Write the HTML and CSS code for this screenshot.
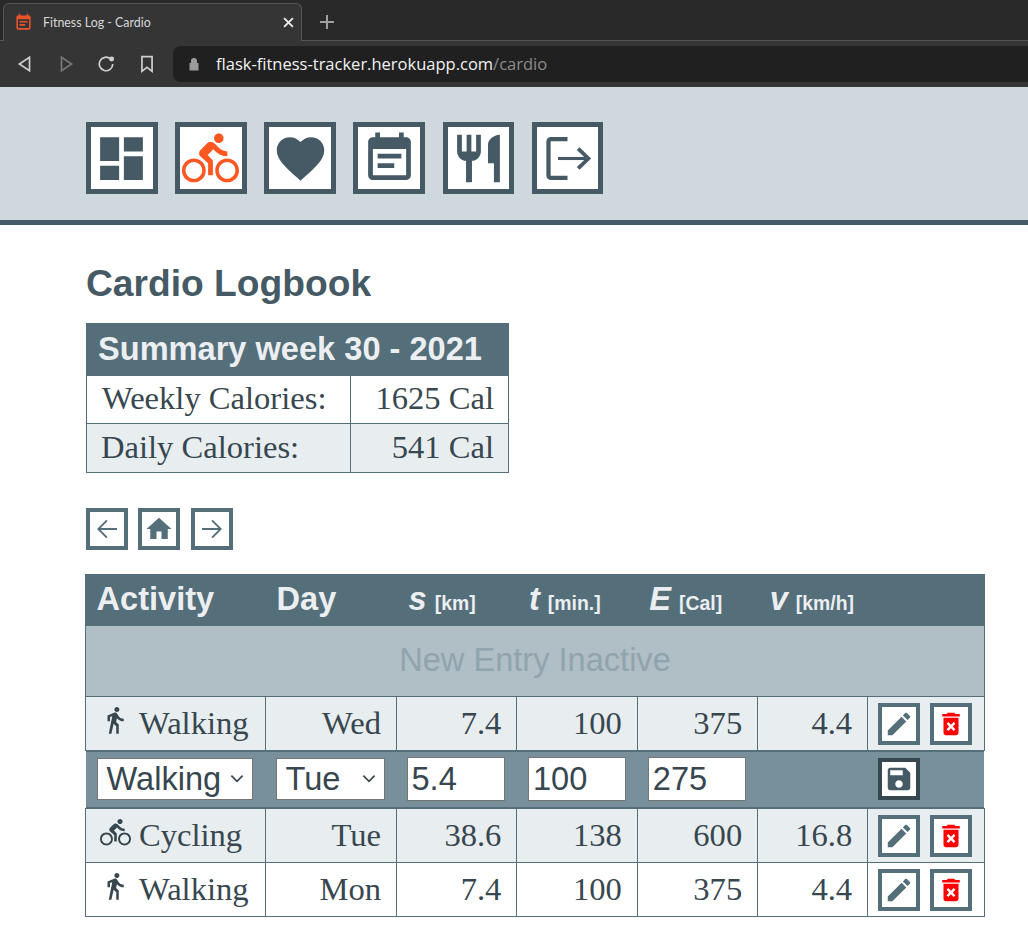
FILE: index.html
```html
<!DOCTYPE html>
<html lang="en">
<head>
  <meta charset="UTF-8" />
  <meta name="viewport" content="width=device-width, initial-scale=1" />
  <title>Fitness Log - Cardio</title>
  <link rel="stylesheet" href="styles.css">
</head>
<body>

  <svg class="sprite" aria-hidden="true">
    <symbol id="i-dashboard" viewBox="0 0 24 24"><path d="M3 13h8V3H3v10zm0 8h8v-6H3v6zm10 0h8V11h-8v10zm0-18v6h8V3h-8z"/></symbol>
    <symbol id="i-bike" viewBox="0 0 24 24"><path d="M15.5 5.5c1.1 0 2-.9 2-2s-.9-2-2-2-2 .9-2 2 .9 2 2 2zM5 12c-2.8 0-5 2.2-5 5s2.2 5 5 5 5-2.2 5-5-2.2-5-5-5zm0 8.5c-1.9 0-3.5-1.6-3.5-3.5s1.6-3.5 3.5-3.5 3.5 1.6 3.5 3.5-1.6 3.5-3.5 3.5zm5.8-10l2.4-2.4.8.8c1.3 1.3 3 2.1 5.1 2.1V9c-1.5 0-2.7-.6-3.6-1.5l-1.9-1.9c-.5-.4-1-.6-1.6-.6s-1.1.2-1.4.6L7.8 8.4c-.4.4-.6.9-.6 1.4 0 .6.2 1.1.6 1.4L11 14v5h2v-6.2l-2.2-2.3zM19 12c-2.8 0-5 2.2-5 5s2.2 5 5 5 5-2.2 5-5-2.2-5-5-5zm0 8.5c-1.9 0-3.5-1.6-3.5-3.5s1.6-3.5 3.5-3.5 3.5 1.6 3.5 3.5-1.6 3.5-3.5 3.5z"/></symbol>
    <symbol id="i-heart" viewBox="0 0 24 24"><path d="M12 21.35l-1.45-1.32C5.4 15.36 2 12.28 2 8.5 2 5.42 4.42 3 7.5 3c1.74 0 3.41.81 4.5 2.09C13.09 3.81 14.76 3 16.5 3 19.58 3 22 5.42 22 8.5c0 3.78-3.4 6.86-8.55 11.54L12 21.35z"/></symbol>
    <symbol id="i-note" viewBox="0 0 24 24"><path d="M17 10H7v2h10v-2zm2-7h-1V1h-2v2H8V1H6v2H5c-1.11 0-1.99.9-1.99 2L3 19c0 1.1.89 2 2 2h14c1.1 0 2-.9 2-2V5c0-1.1-.9-2-2-2zm0 16H5V8h14v11zm-5-5H7v2h7v-2z"/></symbol>
    <symbol id="i-food" viewBox="0 0 24 24"><path d="M11 9H9V2H7v7H5V2H3v7c0 2.12 1.66 3.84 3.75 3.97V22h2.5v-9.03C11.34 12.84 13 11.12 13 9V2h-2v7zm5-3v8h2.5v8H21V2c-2.76 0-5 2.24-5 4z"/></symbol>
    <symbol id="i-exit" viewBox="0 0 24 24"><path class="line" d="M12 3.8H5a1 1 0 0 0-1 1v14.4a1 1 0 0 0 1 1h7" stroke-width="1.8"/><path class="line" d="M8 12h13" stroke-width="1.3"/><path class="line" d="M16.5 7.8l4.3 4.2-4.3 4.2" stroke-width="1.6"/></symbol>
    <symbol id="i-home" viewBox="0 0 24 24"><path d="M10 20v-6h4v6h5v-8h3L12 3 2 12h3v8z"/></symbol>
    <symbol id="i-back" viewBox="0 0 24 24"><path d="M20 11.25H6.9l5.6-5.6L11.4 4.6 4 12l7.4 7.4 1.1-1.05-5.6-5.6H20z"/></symbol>
    <symbol id="i-next" viewBox="0 0 24 24"><path d="M4 11.25h13.1l-5.6-5.6 1.1-1.05L20 12l-7.4 7.4-1.1-1.05 5.6-5.6H4z"/></symbol>
    <symbol id="i-edit" viewBox="0 0 24 24"><path d="M3 17.25V21h3.75L17.81 9.94l-3.75-3.75L3 17.25zM20.71 7.04c.39-.39.39-1.02 0-1.41l-2.34-2.34c-.39-.39-1.02-.39-1.41 0l-1.83 1.83 3.75 3.75 1.83-1.83z"/></symbol>
    <symbol id="i-delete" viewBox="0 0 24 24"><path d="M6 19c0 1.1.9 2 2 2h8c1.1 0 2-.9 2-2V7H6v12zm2.46-7.12l1.41-1.41L12 12.59l2.12-2.12 1.41 1.41L13.41 14l2.12 2.12-1.41 1.41L12 15.41l-2.12 2.12-1.41-1.41L10.59 14l-2.13-2.12zM15.5 4l-1-1h-5l-1 1H5v2h14V4z"/></symbol>
    <symbol id="i-save" viewBox="0 0 24 24"><path d="M17 3H5c-1.11 0-2 .9-2 2v14c0 1.1.89 2 2 2h14c1.1 0 2-.9 2-2V7l-4-4zm-5 16c-1.66 0-3-1.34-3-3s1.34-3 3-3 3 1.34 3 3-1.34 3-3 3zm3-10H5V5h10v4z"/></symbol>
    <symbol id="i-walk" viewBox="0 0 24 24"><path d="M13.5 5.5c1.1 0 2-.9 2-2s-.9-2-2-2-2 .9-2 2 .9 2 2 2zM9.8 8.9L7 23h2.1l1.8-8 2.1 2v6h2v-7.5l-2.1-2 .6-3C14.8 12 16.8 13 19 13v-2c-1.9 0-3.5-1-4.3-2.4l-1-1.6c-.4-.6-1-1-1.7-1-.3 0-.5.1-.8.1L6 8.3V13h2V9.6l1.8-.7z"/></symbol>
  </svg>

  <div class="browser">
    <div class="tabstrip">
      <div class="tab">
        <svg class="tab-icon"><use href="#i-note"/></svg>
        <span class="tab-title">Fitness Log - Cardio</span>
        <svg class="tab-close" viewBox="0 0 10 10"><path d="M1 1l8 8M9 1l-8 8"/></svg>
      </div>
      <svg class="tab-new" viewBox="0 0 14 14"><path d="M7 0v14M0 7h14"/></svg>
    </div>
    <div class="toolbar">
      <div class="tool-buttons">
        <svg class="tool" viewBox="0 0 16 16"><path d="M12 2v12L3 8z"/></svg>
        <svg class="tool off" viewBox="0 0 16 16"><path d="M4 2v12l9-6z"/></svg>
        <svg class="tool" viewBox="0 0 16 16"><path d="M14 8a6 6 0 1 1-2-4.5"/><circle class="dot" cx="13" cy="3.5" r="2.2"/></svg>
        <svg class="tool" viewBox="0 0 16 16"><path d="M3.5 1.5h9v13L8 11l-4.5 3.5z"/></svg>
      </div>
      <div class="omnibox">
        <svg class="lock" viewBox="0 0 12 14"><path d="M3 6V4a3 3 0 0 1 6 0v2h1.5v7.5h-9V6z"/></svg>
        <span class="url">flask-fitness-tracker.herokuapp.com<span class="url-path">/cardio</span></span>
      </div>
    </div>
  </div>

  <header class="site-header">
    <nav class="main-nav">
      <a class="nav-btn"><svg><use href="#i-dashboard"/></svg></a>
      <a class="nav-btn active"><svg><use href="#i-bike"/></svg></a>
      <a class="nav-btn"><svg><use href="#i-heart"/></svg></a>
      <a class="nav-btn"><svg><use href="#i-note"/></svg></a>
      <a class="nav-btn"><svg><use href="#i-food"/></svg></a>
      <a class="nav-btn"><svg><use href="#i-exit"/></svg></a>
    </nav>
  </header>

  <main class="content">
    <h1>Cardio Logbook</h1>

    <table class="summary">
      <colgroup><col class="c-label"><col></colgroup>
      <thead>
        <tr><th colspan="2">Summary week 30 - 2021</th></tr>
      </thead>
      <tbody>
        <tr><td>Weekly Calories:</td><td class="num">1625 Cal</td></tr>
        <tr class="alt"><td>Daily Calories:</td><td class="num">541 Cal</td></tr>
      </tbody>
    </table>

    <div class="pager">
      <a class="mini-btn"><svg><use href="#i-back"/></svg></a>
      <a class="mini-btn"><svg><use href="#i-home"/></svg></a>
      <a class="mini-btn"><svg><use href="#i-next"/></svg></a>
    </div>

    <table class="log">
      <colgroup>
        <col class="c-activity"><col class="c-day"><col class="c-val"><col class="c-val"><col class="c-val"><col class="c-v"><col class="c-actions">
      </colgroup>
      <thead>
        <tr>
          <th>Activity</th>
          <th>Day</th>
          <th><i>s</i> <small>[km]</small></th>
          <th><i>t</i> <small>[min.]</small></th>
          <th><i>E</i> <small>[Cal]</small></th>
          <th><i>v</i> <small>[km/h]</small></th>
          <th></th>
        </tr>
      </thead>
      <tbody>
        <tr class="new-entry"><td colspan="7">New Entry Inactive</td></tr>
        <tr class="alt">
          <td class="activity"><svg class="act-icon walk"><use href="#i-walk"/></svg>Walking</td>
          <td class="num">Wed</td><td class="num">7.4</td><td class="num">100</td><td class="num">375</td><td class="num">4.4</td>
          <td class="actions">
            <a class="mini-btn"><svg><use href="#i-edit"/></svg></a>
            <a class="mini-btn del"><svg><use href="#i-delete"/></svg></a>
          </td>
        </tr>
        <tr class="editing">
          <td><div class="fake-select wide">Walking<svg viewBox="0 0 12 8"><path d="M1 1.5l5 5 5-5"/></svg></div></td>
          <td><div class="fake-select">Tue<svg viewBox="0 0 12 8"><path d="M1 1.5l5 5 5-5"/></svg></div></td>
          <td><input type="text" value="5.4"></td>
          <td><input type="text" value="100"></td>
          <td><input type="text" value="275"></td>
          <td></td>
          <td class="actions"><a class="mini-btn save"><svg><use href="#i-save"/></svg></a></td>
        </tr>
        <tr class="alt">
          <td class="activity"><svg class="act-icon bike"><use href="#i-bike"/></svg>Cycling</td>
          <td class="num">Tue</td><td class="num">38.6</td><td class="num">138</td><td class="num">600</td><td class="num">16.8</td>
          <td class="actions">
            <a class="mini-btn"><svg><use href="#i-edit"/></svg></a>
            <a class="mini-btn del"><svg><use href="#i-delete"/></svg></a>
          </td>
        </tr>
        <tr>
          <td class="activity"><svg class="act-icon walk"><use href="#i-walk"/></svg>Walking</td>
          <td class="num">Mon</td><td class="num">7.4</td><td class="num">100</td><td class="num">375</td><td class="num">4.4</td>
          <td class="actions">
            <a class="mini-btn"><svg><use href="#i-edit"/></svg></a>
            <a class="mini-btn del"><svg><use href="#i-delete"/></svg></a>
          </td>
        </tr>
      </tbody>
    </table>
  </main>

</body>
</html>
```

FILE: styles.css
```css
/* Fitness log page, with the browser frame on top */
body {
  margin: 0;
  background: #fff;
  font-family: "Liberation Serif", serif;
  color: #37474f;
  overflow: hidden;
}

.sprite {
  display: none;
}

/* Browser frame */
.browser {
  background: #353535;
  font-family: "Open Sans", sans-serif;
}

.tabstrip {
  height: 41px;
  box-sizing: border-box;
  background: #292929;
  border-bottom: 1px solid #555;
  display: flex;
  align-items: flex-end;
  padding-left: 3px;
}

.tab {
  width: 299px;
  height: 38px;
  margin-bottom: -1px;
  box-sizing: border-box;
  background: #353535;
  border: 1px solid #555;
  border-bottom: none;
  border-radius: 6px 6px 0 0;
  display: flex;
  align-items: center;
  padding: 0 5px 1px 10px;
  color: #d8d8d8;
  font-family: Lato, sans-serif;
  font-size: 12.4px;
}

.tab-icon {
  width: 19px;
  height: 19px;
  fill: #e8542a;
  margin-right: 10px;
}

.tab-title {
  flex: 1;
}

.tab-close {
  width: 11px;
  height: 11px;
  margin-right: 2px;
  fill: none;
  stroke: #e8e8e8;
  stroke-width: 1.8;
}

.tab-new {
  width: 14px;
  height: 14px;
  margin: 0 0 11px 18px;
  fill: none;
  stroke: #a0a0a0;
  stroke-width: 2;
}

.toolbar {
  height: 46px;
  box-sizing: border-box;
  display: flex;
  align-items: center;
  padding: 0 0 0 16px;
}

.tool-buttons {
  display: flex;
  gap: 22.7px;
  width: 157px;
}

.tool {
  width: 18px;
  height: 18px;
  fill: none;
  stroke: #d0d0d0;
  stroke-width: 1.5;
}

.tool.off {
  stroke: #777;
}

.tool .dot {
  fill: #d0d0d0;
  stroke: none;
}

.omnibox {
  flex: 1;
  height: 36px;
  background: #202020;
  border-radius: 8px 0 0 8px;
  display: flex;
  align-items: center;
  padding-left: 15px;
}

.lock {
  width: 12px;
  height: 14px;
  fill: #9a9a9a;
  margin-right: 16px;
}

.url {
  padding-bottom: 2px;
  color: #f2f2f2;
  font-size: 16.5px;
}

.url-path {
  color: #8c8c8c;
}

/* Site header */
.site-header {
  background: #cfd8dc;
  border-bottom: 5px solid #455a64;
  padding: 35px 86px 26px;
}

.main-nav {
  display: flex;
  gap: 17.55px;
}

.nav-btn {
  width: 71.6px;
  height: 72px;
  box-sizing: border-box;
  background: #fff;
  border: 5px solid #455a64;
  display: flex;
  align-items: center;
  justify-content: center;
  fill: #455a64;
}

.nav-btn svg {
  width: 57px;
  height: 57px;
}

.line {
  fill: none;
  stroke: #455a64;
}

.nav-btn.active {
  fill: #ff5722;
}

/* Page content */
.content {
  padding: 0 43px 0 86px;
}

h1 {
  margin: 37px 0 19px;
  font: bold 37.2px/42px "Liberation Sans", sans-serif;
  color: #455a64;
}

table {
  border-collapse: collapse;
}

.summary {
  width: 423px;
  table-layout: fixed;
  font-size: 32.6px;
}

.c-label {
  width: 264px;
}

.summary th {
  height: 49px;
  padding: 0 11px 2px;
  border: 1px solid #546e7a;
  background: #546e7a;
  color: #eceff1;
  font: bold 32.6px "Liberation Sans", sans-serif;
  text-align: left;
}

.summary td {
  height: 45px;
  padding: 0 14px 2px 15px;
  border: 1px solid #546e7a;
}

.summary .alt td {
  height: 46px;
  padding-left: 14px;
}

.alt td {
  background: #e8edf0;
}

.num {
  text-align: right;
}

.pager {
  display: flex;
  gap: 10.4px;
  margin: 35px 0 24px;
}

.mini-btn {
  width: 42px;
  height: 42px;
  box-sizing: border-box;
  background: #fff;
  border: 4px solid #546e7a;
  display: inline-flex;
  align-items: center;
  justify-content: center;
  fill: #546e7a;
}

.mini-btn svg {
  width: 30px;
  height: 30px;
}

.mini-btn.del {
  fill: #f00;
}

.mini-btn.save {
  border-color: #37474f;
  fill: #455a64;
}

/* Log table */
.log {
  width: 899px;
  margin-left: -1px;
  table-layout: fixed;
  font-size: 32.6px;
}

.c-activity { width: 180px; }
.c-day { width: 131px; }
.c-val { width: 120.4px; }
.c-v { width: 110px; }
.c-actions { width: 116.8px; }

.log th {
  height: 48px;
  padding: 0 0 2px 11.5px;
  border: 1px solid #546e7a;
  background: #546e7a;
  color: #eceff1;
  font: bold 32.6px "Liberation Sans", sans-serif;
  text-align: left;
}

.log th:nth-child(-n+2) {
  padding-left: 10.5px;
}

.log th small {
  margin-left: -1px;
  font-size: 19.4px;
}

.log td {
  height: 53px;
  padding: 0 15px 0 14px;
  border: 1px solid #546e7a;
}

.log td.activity {
  padding: 0 0 0 14px;
  white-space: nowrap;
}

.log .new-entry td {
  height: 68px;
  padding: 0 0 2px;
  background: #b0bec5;
  color: #90a4ae;
  font-family: "Liberation Sans", sans-serif;
  text-align: center;
}

.act-icon {
  width: 30px;
  height: 30px;
  fill: #37474f;
  vertical-align: -1px;
  margin-right: 9px;
}

.act-icon.bike {
  width: 31px;
  height: 31px;
  vertical-align: -2px;
  margin-right: 8px;
}

.log td.actions {
  padding: 0 0 0 10px;
  white-space: nowrap;
  font-size: 0;
}

.actions .mini-btn + .mini-btn {
  margin-left: 10px;
}

.actions .mini-btn {
  vertical-align: middle;
}

.log .editing td {
  height: 55px;
  padding: 0 0 2px 11px;
  border-left: none;
  border-right: none;
  background: #78909c;
  box-shadow: inset 0 1px #546e7a, inset 0 -1px #546e7a;
}

.log .editing td:nth-child(2),
.log .editing td:nth-child(3),
.log .editing td.actions {
  padding-left: 10px;
}

.log .editing td:nth-child(5) {
  padding-left: 10.5px;
}

.fake-select {
  width: 109px;
  height: 42px;
  box-sizing: border-box;
  background: #fff;
  border: 1px solid #757575;
  display: flex;
  align-items: center;
  justify-content: space-between;
  padding: 0 8px 0 9px;
  font: 32.6px "Liberation Sans", sans-serif;
  color: #37474f;
}

.fake-select.wide {
  width: 156px;
}

.fake-select svg {
  width: 14px;
  height: 9px;
  fill: none;
  stroke: #37474f;
  stroke-width: 1.5;
}

.log input {
  width: 98px;
  height: 44px;
  box-sizing: border-box;
  padding: 0 4px;
  background: #fff;
  border: 1px solid #757575;
  font: 32.6px "Liberation Sans", sans-serif;
  color: #37474f;
  display: block;
}
```
